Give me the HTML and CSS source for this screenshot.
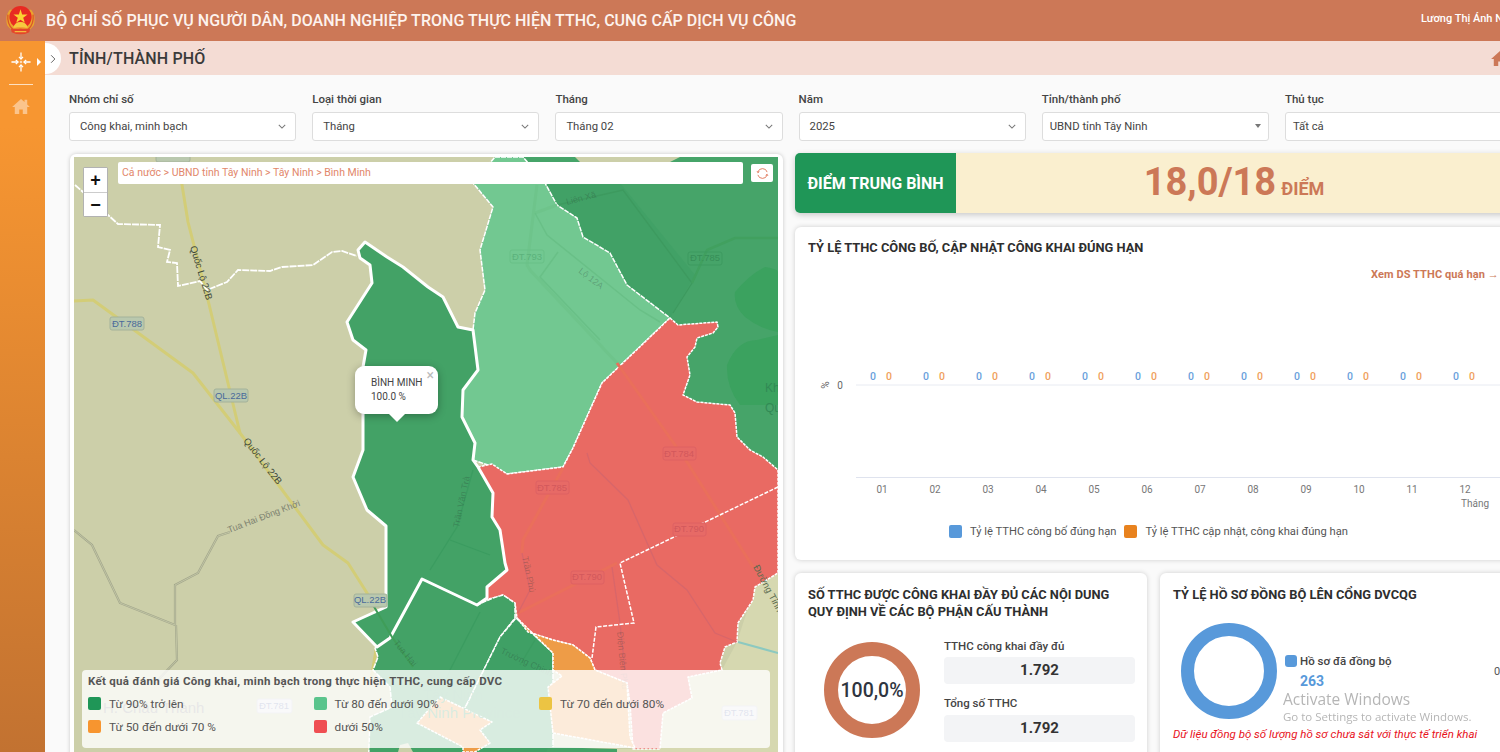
FILE: index.html
```html
<!DOCTYPE html>
<html lang="vi">
<head>
<meta charset="utf-8">
<title>Bộ chỉ số phục vụ người dân</title>
<link rel="stylesheet" href="styles.css">
</head>
<body>
<div class="app">
  <header class="topbar">
    <svg class="emblem" viewBox="0 0 32 32">
      <path d="M5 5Q1 10 1.500 15 1 21 5 24 8 28 12 28.500L20 28.500Q24 28 27 24 31 21 30.500 15 31 10 27 5Z" fill="#eca42c"/>
      <path d="M3 10Q2 20 8 25M29 10Q30 20 24 25" stroke="#d9572a" stroke-width="1.400" fill="none"/>
      <circle cx="16" cy="12.500" r="11.500" fill="#e82a22"/>
      <polygon points="16,4.500 17.700,9.800 23.300,9.800 18.800,13.100 20.500,18.400 16,15.100 11.500,18.400 13.200,13.100 8.700,9.800 14.300,9.800" fill="#fbd233"/>
      <path d="M8.500 23.500Q10 17.500 16 17.500T23.500 23.500Z" fill="#f7c93f"/>
      <path d="M6 24.500H26L25 28Q16 32.500 7 28Z" fill="#e4462a"/>
      <path d="M10 27.500H22" stroke="#f5c242" stroke-width="1.200"/>
    </svg>
    <h1 class="app-title">BỘ CHỈ SỐ PHỤC VỤ NGƯỜI DÂN, DOANH NGHIỆP TRONG THỰC HIỆN TTHC, CUNG CẤP DỊCH VỤ CÔNG</h1>
    <span class="user">Lương Thị Ánh Nguyệt</span>
  </header>
  <div class="shell">
    <aside class="sidebar">
      <div class="side-top">
        <svg class="side-icon" viewBox="0 0 22 22" fill="none" stroke="#fff" stroke-width="1.400">
          <path d="M11 0.500V7.500M0.500 11H7.500M11 21.500V14.500M21.500 11H14.500"/>
          <path d="M8.800 5.300 11 7.800 13.200 5.300M5.300 8.800 7.800 11 5.300 13.200M8.800 16.700 11 14.200 13.200 16.700M16.700 8.800 14.200 11 16.700 13.200"/>
          <path d="M11 9.200 11.500 10.500 12.800 11 11.500 11.500 11 12.800 10.500 11.500 9.200 11 10.500 10.500Z" fill="#fff" stroke="none"/>
        </svg>
        <span class="side-caret"></span>
      </div>
      <div class="side-rule"></div>
      <svg class="side-home" viewBox="0 0 20 18"><path d="M10 1 0 10h3v8h5v-5h4v5h5v-8h3l-3-2.700V2h-3v2.600Z" fill="#fbc48c"/></svg>
    </aside>
    <main class="main">
      <div class="subhead">
        <button class="toggle"><svg viewBox="0 0 8 12" class="toggle-icon"><path d="M1.500 1 6.500 6 1.500 11" fill="none" stroke="#666" stroke-width="1.300"/></svg></button>
        <h2 class="page-title">TỈNH/THÀNH PHỐ</h2>
        <svg class="sub-home" viewBox="0 0 20 18"><path d="M10 1 0 10h3v8h5v-5h4v5h5v-8h3l-3-2.700V2h-3v2.600Z" fill="#cc7857"/></svg>
      </div>
      <div class="filters">
        <div class="field"><label class="field-label">Nhóm chỉ số</label><div class="select"><span>Công khai, minh bạch</span><svg class="chev" viewBox="0 0 10 6"><path d="M1 1 5 5 9 1" fill="none" stroke="#777" stroke-width="1.300"/></svg></div></div>
        <div class="field"><label class="field-label">Loại thời gian</label><div class="select"><span>Tháng</span><svg class="chev" viewBox="0 0 10 6"><path d="M1 1 5 5 9 1" fill="none" stroke="#777" stroke-width="1.300"/></svg></div></div>
        <div class="field"><label class="field-label">Tháng</label><div class="select"><span>Tháng 02</span><svg class="chev" viewBox="0 0 10 6"><path d="M1 1 5 5 9 1" fill="none" stroke="#777" stroke-width="1.300"/></svg></div></div>
        <div class="field"><label class="field-label">Năm</label><div class="select"><span>2025</span><svg class="chev" viewBox="0 0 10 6"><path d="M1 1 5 5 9 1" fill="none" stroke="#777" stroke-width="1.300"/></svg></div></div>
        <div class="field"><label class="field-label">Tỉnh/thành phố</label><div class="select tight"><span>UBND tỉnh Tây Ninh</span><span class="caret"></span></div></div>
        <div class="field"><label class="field-label">Thủ tục</label><div class="select tight"><span>Tất cả</span></div></div>
      </div>
      <div class="content">
        <section class="map-card">
          <div class="map">
            <svg class="map-svg" viewBox="74 157 704 620">
              <rect x="74" y="157" width="704" height="620" fill="#cccfa9"/>
              <polygon class="land2" points="722,670 737,642 755,587 778,573 778,777 617,777 617,749 660,749 663,713 692,698 688,677"/>
              <polyline class="river" points="738,642 778,653"/>
              <!-- north-east forest -->
              <polygon fill="#46a469" points="523,157 778,157 778,470 763,457 750,450 737,437 735,413 730,405 697,402 683,395 690,375 687,357 695,347 697,338 713,333 718,327 717,322 678,325 670,318 627,285 610,253 583,237 577,218 557,205 545,183"/>
              <polygon fill="#41a166" points="545,183 620,183 695,275 670,318 627,285 610,253 583,237 577,218 557,205"/>
              <path fill="#3ba25f" d="M735 292q15-18 30-25 13 2 13 5v60q-18-3-33-15-12-12-10-25ZM727 365q10-25 30-25l21-5v70h-38q-14-18-13-40Z"/>
              <polyline class="road-faint" points="557,205 623,190 692,283 673,313"/>
              <polyline class="road-faint2" points="692,283 707,250 735,238 778,238"/>
              <polygon class="top-beige" points="575,157 680,157 670,162 580,162"/>
              <!-- light green -->
              <polygon class="b-thin" fill="#72c891" points="495,157 523,157 545,183 557,205 577,218 583,237 610,253 627,285 670,318 602,383 573,448 563,467 507,474 488,465 473,460 475,443 462,417 463,390 478,370 473,330 475,313 485,290 480,250 493,207 473,183"/>
              <polyline class="road-on-light" points="537,185 527,265 530,270 617,363"/>
              <polyline class="road-on-light" points="535,213 557,205"/>
              <polyline class="road-on-light2" points="535,213 547,235 640,310 660,322"/>
              <polyline class="road-on-light2" points="558,252 540,277 600,340"/>
              <!-- red -->
              <polygon class="b-dash" fill="#e96a63" points="670,318 678,325 717,322 718,327 713,333 697,338 695,347 687,357 690,375 683,395 697,402 730,405 735,413 737,437 750,450 763,457 778,470 778,573 755,587 753,600 738,623 737,642 725,647 720,663 722,670 688,677 692,698 663,713 660,749 633,749 630,703 627,683 595,670 590,658 573,645 553,640 528,632 517,618 515,603 503,595 493,598 485,600 487,587 507,570 505,563 500,530 492,517 493,493 478,467 492,464 507,474 563,467 573,448 602,383"/>
              <polyline class="road-red" points="617,363 687,462 753,567"/>
              <polyline class="road-red" points="563,468 523,540 522,553"/>
              <polyline class="road-red" points="617,563 518,613"/>
              <polyline class="road-red-thin" points="587,453 590,463 628,500 657,565 687,590 715,633 737,642"/>
              <polyline class="road-red-thin" points="612,567 620,623 625,670"/>
              <polyline class="road-red-thin" points="522,553 530,590 518,613"/>
              <polyline class="b-inner" points="778,487 620,563 634,623 596,627 592,658"/>
              <g class="tag-red">
                <rect x="536" y="481" width="33" height="13" rx="2"/><text x="552" y="491">ĐT.785</text>
                <rect x="663" y="447" width="33" height="13" rx="2"/><text x="679" y="457">ĐT.784</text>
                <rect x="673" y="523" width="33" height="13" rx="2"/><text x="689" y="532">ĐT.790</text>
                <rect x="571" y="571" width="33" height="13" rx="2"/><text x="587" y="580">ĐT.790</text>
              </g>
              <!-- south: lower communes -->
              <polyline class="road-main" points="377,613 376,650 371,680"/>
              <polygon class="b-thin" fill="#43a266" points="422,579 477,605 493,598 503,595 515,603 515,618 500,637 465,708 463,777 368,777 370,717 392,707 390,687 373,670 378,657 375,648 390,638"/>
              <polygon class="b-thin" fill="#3fa065" points="516,618 553,653 553,777 463,777 465,708 500,637"/>
              <polyline class="road-dark" points="480,612 450,670 442,690"/>
              <polyline class="road-dark" points="535,640 520,665"/>
              <polygon class="b-dash" fill="#ee9c47" points="517,618 528,632 553,640 573,645 590,658 595,670 627,683 630,737 635,748 553,733 548,687 562,676 553,670 553,653"/>
              <polygon class="b-dash" fill="#ee9c47" points="440,697 492,722 480,730 490,743 475,752 463,752 463,747 417,723"/>
              <polygon fill="#cccfa9" points="400,745 408,743 413,752 398,752"/>
              <polygon fill="#43a266" points="538,777 548,747 617,749 617,777"/>
              <!-- Binh Minh -->
              <polygon class="b-thick" fill="#43a266" points="365,242 387,257 403,267 428,287 443,297 458,327 473,330 478,370 463,390 462,417 475,443 473,460 478,467 493,493 492,517 500,530 505,563 507,570 487,587 487,598 477,605 422,579 390,638 377,647 353,622 386,607 386,526 367,510 353,477 363,450 363,367 366,350 353,340 347,322 372,283 370,265 360,258 358,250"/>
              <polyline class="road-dark" points="473,470 457,527 430,570"/>
              <polyline class="road-dark" points="450,540 490,555"/>
              <polyline class="road-main" points="178,160 188,222 208,300 240,433 277,483 323,545 348,563 367,593 373,605"/>
              <polyline class="road-main" points="74,301 93,300 193,373 240,433"/>
              <polyline class="road-on-dark" points="373,605 392,637 413,667"/>
              <polyline class="boundary" points="75,185 83,192 108,215 118,224 160,225 158,247 170,250 167,262 177,263 178,286 200,281 207,290 227,282 238,270 270,271 282,267 313,265 332,252 342,251 357,256"/>
              <polyline class="track" points="74,530 92,545 120,603 175,625 175,585 198,573 218,536 230,532"/>
              <polyline class="track" points="176,625 177,660 155,683"/>
              <polyline class="track-in" points="74,530 92,545 120,603 175,625 175,585 198,573 218,536 230,532"/>
              <polyline class="track-in" points="176,625 177,660 155,683"/>
              <g class="tag">
                <rect x="110" y="317" width="34" height="13" rx="2"/><text x="127" y="327">ĐT.788</text>
                <rect x="214" y="389" width="34" height="13" rx="2"/><text x="231" y="399">QL.22B</text>
                <rect x="354" y="594" width="33" height="13" rx="2"/><text x="370" y="603">QL.22B</text>
                <rect x="156" y="155" width="34" height="7" rx="2"/>
              </g>
              <g class="tag-light">
                <rect x="510" y="250" width="34" height="13" rx="2"/><text x="527" y="260">ĐT.793</text>
              </g>
              <g class="tag-green">
                <rect x="688" y="252" width="34" height="13" rx="2"/><text x="705" y="261">ĐT.785</text>
              </g>
              <text class="road-name" transform="translate(190 247) rotate(73)">Quốc Lộ 22B</text>
              <text class="road-name" transform="translate(243 441) rotate(52)">Quốc Lộ 22B</text>
              <text class="track-name" transform="translate(229 533) rotate(-21)">Tua Hai Đồng Khởi</text>
              <text class="dark-name" transform="translate(567 205) rotate(-15)">Liên Xã</text>
              <text class="dark-name" transform="translate(578 272) rotate(38)">Lộ 12A</text>
              <text class="dark-name" transform="translate(459 528) rotate(-78)">Trần Văn Trà</text>
              <text class="dark-name" transform="translate(393 643) rotate(50)">Tua Hai</text>
              <text class="dark-name" transform="translate(500 653) rotate(25)">Trường Chinh</text>
              <text class="dark-name" transform="translate(522 557) rotate(78)">Trần Phú</text>
              <text class="dark-name" transform="translate(617 632) rotate(85)">Điện Biên Phủ</text>
              <text class="road-name side" transform="translate(753 567) rotate(62)">Đường Tỉnh</text>
              <text class="forest-name" x="765" y="392">Kh</text>
              <text class="forest-name" x="765" y="412">Qu</text>
              <text class="under" x="103" y="713">H. Châu Thành</text>
              <text class="under green" x="423" y="700">Tây Ninh</text>
              <text class="under green" x="398" y="718">Tây Ninh Province</text>
              <rect class="under-tag" x="257" y="699" width="35" height="14" rx="2"/>
              <text class="under-tagt" x="274" y="709">ĐT.781</text>
              <rect class="under-tag" x="722" y="706" width="35" height="14" rx="2"/>
              <text class="under-tagt" x="739" y="716">ĐT.781</text>
            </svg>
            <div class="zoom-ctl"><button class="zoom-btn">+</button><button class="zoom-btn minus">−</button></div>
            <div class="crumbs">Cả nước &gt; UBND tỉnh Tây Ninh &gt; Tây Ninh &gt; Bình Minh</div>
            <button class="refresh"><svg viewBox="0 0 14 14" class="refresh-icon" fill="none" stroke="#e0775a" stroke-width="1"><path d="M2 5.500A5.200 5.200 0 0 1 12 5.500M12 8.500A5.200 5.200 0 0 1 2 8.500"/><path d="M1.200 4.500 2 6.200 3.600 5M12.800 9.500 12 7.800 10.400 9"/></svg></button>
            <div class="popup">
              <span class="popup-x">×</span>
              <div>BÌNH MINH</div>
              <div>100.0 %</div>
            </div>
            <div class="legend">
              <div class="legend-title">Kết quả đánh giá Công khai, minh bạch trong thực hiện TTHC, cung cấp DVC</div>
              <div class="legend-grid">
                <div class="legend-item"><i class="sq c1"></i>Từ 90% trở lên</div>
                <div class="legend-item"><i class="sq c2"></i>Từ 80 đến dưới 90%</div>
                <div class="legend-item"><i class="sq c3"></i>Từ 70 đến dưới 80%</div>
                <div class="legend-item"><i class="sq c4"></i>Từ 50 đến dưới 70 %</div>
                <div class="legend-item"><i class="sq c5"></i>dưới 50%</div>
              </div>
            </div>
          </div>
        </section>
        <div class="right">
          <section class="score">
            <div class="score-label">ĐIỂM TRUNG BÌNH</div>
            <div class="score-value"><b class="score-num">18,0/18</b><b class="score-unit">ĐIỂM</b></div>
          </section>
          <section class="card chart-card">
            <h3 class="card-title">TỶ LỆ TTHC CÔNG BỐ, CẬP NHẬT CÔNG KHAI ĐÚNG HẠN</h3>
            <a class="overdue">Xem DS TTHC quá hạn →</a>
            <svg class="chart" viewBox="795 281 717 234">
              <line class="grid" x1="856" y1="385" x2="1512" y2="385"/>
              <line class="axis" x1="856" y1="477.500" x2="1512" y2="477.500"/>
              <text class="ax-title" transform="translate(829 385) rotate(-90)">%</text>
              <text class="ax" x="840" y="389">0</text>
              <g class="v-a">
                <text x="873" y="380">0</text><text x="926" y="380">0</text><text x="979" y="380">0</text><text x="1032" y="380">0</text><text x="1085" y="380">0</text><text x="1138" y="380">0</text><text x="1191" y="380">0</text><text x="1244" y="380">0</text><text x="1297" y="380">0</text><text x="1350" y="380">0</text><text x="1403" y="380">0</text><text x="1456" y="380">0</text>
              </g>
              <g class="v-b">
                <text x="889" y="380">0</text><text x="942" y="380">0</text><text x="995" y="380">0</text><text x="1048" y="380">0</text><text x="1101" y="380">0</text><text x="1154" y="380">0</text><text x="1207" y="380">0</text><text x="1260" y="380">0</text><text x="1313" y="380">0</text><text x="1366" y="380">0</text><text x="1419" y="380">0</text><text x="1472" y="380">0</text>
              </g>
              <g class="ticks">
                <text x="882" y="493">01</text><text x="935" y="493">02</text><text x="988" y="493">03</text><text x="1041" y="493">04</text><text x="1094" y="493">05</text><text x="1147" y="493">06</text><text x="1200" y="493">07</text><text x="1253" y="493">08</text><text x="1306" y="493">09</text><text x="1359" y="493">10</text><text x="1412" y="493">11</text><text x="1465" y="493">12</text>
                <text x="1475" y="507">Tháng</text>
              </g>
            </svg>
            <div class="chart-legend">
              <span class="cl-item"><i class="cl-sq blue"></i>Tỷ lệ TTHC công bố đúng hạn</span>
              <span class="cl-item"><i class="cl-sq orange"></i>Tỷ lệ TTHC cập nhật, công khai đúng hạn</span>
            </div>
          </section>
          <div class="bottom">
            <section class="card small">
              <h3 class="card-title">SỐ TTHC ĐƯỢC CÔNG KHAI ĐẦY ĐỦ CÁC NỘI DUNG QUY ĐỊNH VỀ CÁC BỘ PHẬN CẤU THÀNH</h3>
              <div class="pub-body">
                <div class="donut brown"><span>100,0%</span></div>
                <div class="stats">
                  <div class="stat-label">TTHC công khai đầy đủ</div>
                  <div class="stat-box">1.792</div>
                  <div class="stat-label second">Tổng số TTHC</div>
                  <div class="stat-box">1.792</div>
                </div>
              </div>
            </section>
            <section class="card small">
              <h3 class="card-title">TỶ LỆ HỒ SƠ ĐỒNG BỘ LÊN CỔNG DVCQG</h3>
              <div class="sync-body">
                <div class="donut blue-ring"></div>
                <div class="sync-legend">
                  <div class="sync-row"><i class="sync-sq"></i>Hồ sơ đã đồng bộ</div>
                  <div class="sync-num">263</div>
                </div>
                <div class="sync-zero">0</div>
              </div>
              <p class="sync-note">Dữ liệu đồng bộ số lượng hồ sơ chưa sát với thực tế triển khai</p>
            </section>
          </div>
        </div>
      </div>
    </main>
  </div>
</div>
<div class="activate">
  <div class="act-1">Activate Windows</div>
  <div class="act-2">Go to Settings to activate Windows.</div>
</div>
</body>
</html>
```
FILE: styles.css
```css
* { box-sizing: border-box; }
html, body { margin: 0; height: 752px; overflow: hidden; }
body { font-family: Roboto, "Noto Sans", sans-serif; color: #333; background: #fafafa; }
h1, h2, h3, p { margin: 0; }
.app { width: 1500px; height: 752px; overflow: hidden; display: flex; flex-direction: column; }

.topbar { height: 41px; flex: none; background: #cc7857; display: flex; align-items: center; padding-left: 5px; position: relative; color: #fff; }
.emblem { width: 31px; height: 31px; flex: none; }
.app-title { font-size: 16px; font-weight: 500; margin-left: 10px; white-space: nowrap; letter-spacing: .03px; color: #fdf3ee; }
.user { margin-left: auto; font-size: 11px; font-weight: 500; white-space: nowrap; position: absolute; left: 1421px; top: 12px; }

.shell { flex: 1; display: flex; min-height: 0; }
.sidebar { width: 45px; flex: none; background: linear-gradient(#f79631 12%, #c27231 100%); display: flex; flex-direction: column; align-items: center; padding-top: 11px; }
.side-top { display: flex; align-items: center; width: 45px; padding-left: 11px; }
.side-icon { width: 20px; height: 20px; }
.side-caret { margin-left: 6px; border-left: 4px solid #fff; border-top: 4px solid transparent; border-bottom: 4px solid transparent; }
.side-rule { width: 24px; height: 1px; background: rgba(255,255,255,.7); margin: 12px 3px 0 0; }
.side-home { width: 18px; height: 16px; margin: 13px 3px 0 0; }

.main { width: 1480px; flex: none; display: flex; flex-direction: column; min-height: 0; }
.subhead { height: 34px; flex: none; background: #f4dcd4; display: flex; align-items: center; position: relative; }
.toggle { width: 16px; height: 31px; margin-top: 1px; border: 0; padding: 0; background: #fff; border-radius: 0 16px 16px 0; display: flex; align-items: center; justify-content: center; }
.toggle-icon { width: 6px; height: 10px; }
.page-title { font-size: 16px; font-weight: 500; color: #3a3a3a; margin: 1px 0 0 8px; letter-spacing: .15px; }
.sub-home { width: 18px; height: 16px; position: absolute; left: 1446px; top: 9px; }

.filters { display: grid; grid-template-columns: repeat(6, 227.200px); column-gap: 16px; padding: 17px 0 0 24px; flex: none; }
.field-label { display: block; font-size: 11.500px; font-weight: 500; color: #444; line-height: 14px; margin-bottom: 6px; }
.select { height: 29px; background: #fff; border: 1px solid #ddd; border-radius: 3px; padding: 0 9px 1px 10px; font-size: 11.300px; color: #444; display: flex; align-items: center; justify-content: space-between; }
.select.tight { padding: 0 6px 1px 7px; }
.chev { width: 8px; height: 5px; flex: none; margin-top: 1px; }
.caret { border-top: 4px solid #777; border-left: 3.500px solid transparent; border-right: 3.500px solid transparent; margin-right: 1px; }

.content { display: grid; grid-template-columns: 713px 717px; column-gap: 12px; padding: 13px 0 0 25px; flex: none; }

.map-card { background: #fff; border-radius: 6px; padding: 3px 5px 0 4px; box-shadow: 0 0 4px rgba(0,0,0,.2); height: 640px; }
.map { position: relative; overflow: hidden; height: 637px; }
.map-svg { display: block; width: 704px; height: 620px; }
.land2 { fill: #d6d8b0; }
.top-beige { fill: #cccfa9; }
.river { fill: none; stroke: #8cc9c0; stroke-width: 2; }
.b-thin { stroke: #fff; stroke-width: 1.500; stroke-dasharray: 5 1; stroke-linejoin: round; }
.b-dash { stroke: #fff; stroke-width: 1.500; stroke-dasharray: 3 1; stroke-linejoin: round; }
.b-thick { stroke: #fff; stroke-width: 3; stroke-linejoin: round; }
.b-inner { fill: none; stroke: #fff; stroke-width: 1.500; stroke-dasharray: 4 1.500; }
.road-main { fill: none; stroke: #d3cd77; stroke-width: 3; stroke-linejoin: round; }
.road-on-dark { fill: none; stroke: #3f9d58; stroke-width: 2; }
.road-faint { fill: none; stroke: #3d9a5f; stroke-width: 1.300; }
.road-faint2 { fill: none; stroke: #41a05f; stroke-width: 2.500; }
.road-on-light { fill: none; stroke: #6ec48b; stroke-width: 3; }
.road-on-light2 { fill: none; stroke: #69c087; stroke-width: 1.500; }
.road-red { fill: none; stroke: #ea6f5b; stroke-width: 3; }
.road-red-thin { fill: none; stroke: #d8666a; stroke-width: 1.300; }
.road-dark { fill: none; stroke: #3b9c60; stroke-width: 1.300; }
.boundary { fill: none; stroke: #fff; stroke-width: 1.800; stroke-dasharray: 7 1; }
.track { fill: none; stroke: #a3a78c; stroke-width: 2.200; }
.track-in { fill: none; stroke: #c8cbaa; stroke-width: .8; }
.tag rect { fill: #b9c8ae; stroke: #a4b29a; }
.tag text { font-size: 9.500px; text-anchor: middle; fill: #4a6a9a; font-family: "Liberation Sans", sans-serif; }
.tag-light rect { fill: none; stroke: #69c087; }
.tag-light text { font-size: 9.500px; text-anchor: middle; fill: #5bb27c; font-family: "Liberation Sans", sans-serif; }
.tag-green rect { fill: none; stroke: #3d9a60; }
.tag-green text { font-size: 9.500px; text-anchor: middle; fill: #378f58; font-family: "Liberation Sans", sans-serif; }
.tag-red rect { fill: #e76a66; stroke: #de6163; }
.tag-red text { font-size: 9.500px; text-anchor: middle; fill: #d2585c; font-family: "Liberation Sans", sans-serif; }
.road-name { font-size: 9.600px; fill: #3e4a3a; font-family: "Liberation Sans", sans-serif; }
.road-name.side { fill: #5a6a4e; }
.track-name { font-size: 9px; fill: #7d8270; font-family: "Liberation Sans", sans-serif; }
.dark-name { font-size: 9px; fill: rgba(40,60,50,.28); font-family: "Liberation Sans", sans-serif; }
.forest-name { font-size: 12px; fill: #328a55; font-family: "Liberation Sans", sans-serif; }
.under { font-size: 15px; fill: #888; font-family: "Liberation Sans", sans-serif; }
.under.green { fill: #3f9a66; }
.under-tag { fill: #dfe0e6; stroke: #c4c5cc; }
.under-tagt { font-size: 9.500px; text-anchor: middle; fill: #6a79aa; font-family: "Liberation Sans", sans-serif; }

.zoom-ctl { position: absolute; left: 9px; top: 10px; width: 25px; background: #fff; border-radius: 2px; border: 1px solid rgba(0,0,0,.3); display: flex; flex-direction: column; }
.zoom-btn { height: 24px; border: 0; padding: 0; background: #fff; font: bold 18px "Liberation Sans", sans-serif; color: #111; line-height: 24px; }
.zoom-btn.minus { border-top: 1px solid #ccc; }
.crumbs { position: absolute; left: 44px; top: 5px; width: 625px; height: 22px; background: #fff; border-radius: 2px; font-size: 10.500px; line-height: 22px; padding-left: 4px; color: #e2876b; }
.refresh { position: absolute; left: 677px; top: 7px; width: 22px; height: 18px; padding: 0; background: #fff; border: 0; border-radius: 2px; display: flex; align-items: center; justify-content: center; }
.refresh-icon { width: 13px; height: 13px; }
.popup { position: absolute; left: 281px; top: 209px; width: 83px; height: 48px; background: #fff; border-radius: 9px; padding: 10px 0 0 16px; font-size: 10px; line-height: 14px; color: #444; white-space: nowrap; box-shadow: 0 2px 8px rgba(0,0,0,.3); }
.popup::after { content: ""; position: absolute; left: 34px; bottom: -8px; border-top: 8px solid #fff; border-left: 8px solid transparent; border-right: 8px solid transparent; }
.popup-x { position: absolute; right: 4px; top: 2px; font-size: 14px; color: #bbb; line-height: 14px; }
.legend { position: absolute; left: 8px; top: 513px; width: 688px; height: 78px; background: rgba(255,255,255,.8); border-radius: 4px; padding: 4px 6px; }
.legend-title { font-size: 11.500px; font-weight: 700; color: #555; letter-spacing: .3px; line-height: 14px; }
.legend-grid { display: grid; grid-template-columns: repeat(3, 225.500px); row-gap: 10px; margin-top: 9px; }
.legend-item { display: flex; align-items: center; font-size: 11.800px; color: #555; height: 13px; }
.sq { width: 13px; height: 13px; border-radius: 2px; margin-right: 8px; flex: none; }
.c1 { background: #1f9657; }
.c2 { background: #5ac48c; }
.c3 { background: #ecc443; }
.c4 { background: #f7952f; }
.c5 { background: #ef4e52; }

.right { display: flex; flex-direction: column; margin-top: -1px; }
.score { height: 60px; display: flex; border-radius: 5px; overflow: hidden; box-shadow: 0 2px 6px rgba(0,0,0,.2); flex: none; }
.score-label { width: 161px; background: #1f9657; color: #fff; font-size: 16px; font-weight: 700; display: flex; align-items: center; justify-content: center; }
.score-value { flex: 1; background: #faefcf; color: #cc7857; display: flex; align-items: baseline; justify-content: center; padding-top: 5px; }
.score-num { font-size: 38px; line-height: 48px; font-weight: 700; }
.score-unit { font-size: 18px; margin-left: 5px; font-weight: 700; }

.card { background: #fff; border-radius: 6px; box-shadow: 0 0 5px rgba(0,0,0,.18); }
.card-title { font-size: 12.850px; font-weight: 700; color: #2e2e2e; line-height: 17px; padding: 12px 13px 0; }
.small .card-title { padding-top: 13px; }
.chart-card { height: 333px; margin-top: 14px; flex: none; position: relative; }
.overdue { position: absolute; left: 576px; top: 41px; font-size: 11px; font-weight: 700; color: #cc7857; line-height: 14px; white-space: nowrap; letter-spacing: .1px; }
.chart { display: block; width: 717px; height: 234px; margin-top: 25px; }
.grid { stroke: #e8ebf2; }
.axis { stroke: #dfe3ee; stroke-width: 1; }
.ax-title, .ax { font-size: 10px; fill: #666; text-anchor: middle; }
.v-a text, .v-b text { font-size: 10.500px; font-weight: 500; text-anchor: middle; }
.v-a text { fill: #6b9fdc; }
.v-b text { fill: #f0a05c; }
.ticks text { font-size: 10px; fill: #777; text-anchor: middle; }
.chart-legend { display: flex; justify-content: flex-start; padding-left: 154px; gap: 8px; margin-top: 10px; }
.cl-item { display: flex; align-items: center; font-size: 11.200px; color: #555; white-space: nowrap; }
.cl-sq { width: 13px; height: 13px; border-radius: 2px; margin-right: 8px; }
.blue { background: #5899da; }
.orange { background: #e8821e; }

.bottom { display: grid; grid-template-columns: 352px 352px; column-gap: 13px; margin-top: 13px; }
.small { height: 200px; }
.pub-body { display: flex; margin-top: 17px; padding: 0 12px 0 29px; }
.donut { width: 96px; height: 96px; border-radius: 50%; flex: none; display: flex; align-items: center; justify-content: center; }
.brown { border: 14px solid #cc7857; margin-top: 5px; }
.brown span { font-size: 19.500px; font-weight: 500; color: #2f3540; white-space: nowrap; }
.stats { margin-left: 24px; flex: 1; }
.stat-label { font-size: 11.500px; font-weight: 500; line-height: 18px; color: #444; margin-bottom: 2px; }
.stat-label.second { margin-top: 10px; margin-bottom: 3px; }
.stat-box { height: 27px; background: #f3f4f6; border-radius: 4px; font-size: 15px; font-weight: 700; color: #333; display: flex; align-items: center; justify-content: center; padding-bottom: 2px; }
.sync-body { display: flex; align-items: center; margin-top: 20px; padding-left: 21px; }
.blue-ring { border: 13px solid #5899da; }
.sync-legend { margin-left: 8px; width: 209px; flex: none; }
.sync-row { display: flex; align-items: center; font-size: 11.500px; font-weight: 500; color: #444; line-height: 14px; }
.sync-sq { width: 12px; height: 12px; border-radius: 3px; background: #5899da; margin-right: 3px; }
.sync-num { font-size: 14px; font-weight: 700; color: #5899da; margin: 5px 0 0 15px; line-height: 16px; }
.sync-zero { font-size: 11px; color: #555; }
.sync-note { font-size: 11.500px; font-style: italic; color: #e8121c; padding-left: 13px; margin-top: 8px; line-height: 14px; white-space: nowrap; }

.activate { position: fixed; left: 1283px; top: 689px; color: rgba(120,120,120,.55); font-family: "Open Sans", sans-serif; white-space: nowrap; pointer-events: none; }
.act-1 { font-size: 15.500px; line-height: 20px; }
.act-2 { font-size: 11.500px; line-height: 16px; }
```
